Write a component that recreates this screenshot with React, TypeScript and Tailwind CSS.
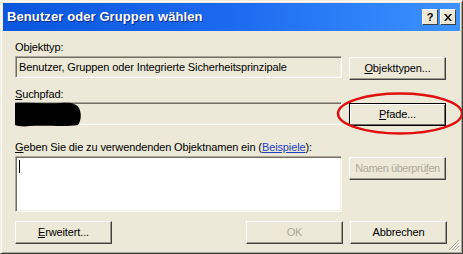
import React from 'react';

// XP-style "Benutzer oder Gruppen wählen" dialog

function Btn({
  children,
  disabled = false,
  isDefault = false,
  className = '',
}: {
  children: React.ReactNode;
  disabled?: boolean;
  isDefault?: boolean;
  className?: string;
}) {
  return (
    <div
      className={
        'h-[23px] w-[97px] flex items-center justify-center whitespace-nowrap bg-[#ECE9D8] text-[11px] leading-none ' +
        (isDefault
          ? 'border border-black shadow-[inset_1px_1px_0_#fff,inset_-1px_-1px_0_#716F64] '
          : 'border border-t-white border-l-white border-b-[#404040] border-r-[#404040] shadow-[inset_-1px_-1px_0_#9D9A8C] ') +
        (disabled ? 'text-[#ACA899] ' : 'text-black ') +
        className
      }
    >
      {children}
    </div>
  );
}

function Field({ children, className = '' }: { children?: React.ReactNode; className?: string }) {
  return (
    <div
      className={
        'w-[327px] border border-t-[#ACA899] border-l-[#ACA899] border-b-white border-r-white shadow-[inset_1px_1px_0_#716F64,inset_-1px_-1px_0_#F1EFE2] ' +
        className
      }
    >
      {children}
    </div>
  );
}

export default function App() {
  return (
    <div className="relative w-[463px] h-[254px] overflow-hidden bg-[#ECE9D8] font-['Liberation_Sans',Arial,sans-serif] text-[11px] tracking-[-0.12px] text-black border border-t-[#F1EFE2] border-l-[#F1EFE2] border-b-[#404040] border-r-[#404040] shadow-[inset_1px_1px_0_#fff,inset_-1px_-1px_0_#ACA899]">
      {/* Title bar */}
      <div className="mx-[2px] mt-[2px] h-[28px] flex items-center justify-between pl-[4px] pr-[4px] bg-gradient-to-r from-[#0A56DE] via-[#1C6AF0] to-[#3E92FD]">
        <span className="text-white font-bold text-[13px] tracking-[0.1px] [text-shadow:1px_1px_0_#0B2B8A]">
          Benutzer oder Gruppen wählen
        </span>
        <div className="flex gap-[2px]">
          <div className="w-[16px] h-[16px] flex items-center justify-center bg-[#ECE9D8] border border-t-white border-l-white border-b-[#404040] border-r-[#404040] text-[11px] font-bold leading-none">
            ?
          </div>
          <div className="w-[16px] h-[16px] flex items-center justify-center bg-[#ECE9D8] border border-t-white border-l-white border-b-[#404040] border-r-[#404040]">
            <svg width="8" height="7" viewBox="0 0 8 7">
              <path d="M0 0h2l2 2.5L6 0h2L5 3.5 8 7H6L4 4.5 2 7H0l3-3.5z" fill="#000" />
            </svg>
          </div>
        </div>
      </div>

      <div className="pl-[14px] pr-[15px]">
        {/* Objekttyp */}
        <div className="mt-[9px] h-[14px] leading-[14px]">Objekttyp:</div>
        <div className="mt-[2px] flex gap-[7px] items-start">
          <Field className="h-[22px] flex items-center pl-[3px]">
            Benutzer, Gruppen oder Integrierte Sicherheitsprinzipale
          </Field>
          <Btn className="mt-[1px]">
            <span>
              <span className="underline">O</span>bjekttypen...
            </span>
          </Btn>
        </div>

        {/* Suchpfad */}
        <div className="mt-[7px] h-[14px] leading-[14px]">
          <span className="underline">S</span>uchpfad:
        </div>
        <div className="mt-[1px] flex gap-[7px] items-start">
          <Field className="h-[23px] relative">
            <svg className="absolute -left-[1px] -top-[1px]" width="68" height="25" viewBox="0 0 68 25">
              <path
                d="M0 1 C10 0 30 2 46 1 C56 0 62 2 64 6 C67 12 66 19 63 23 C52 25 30 23 15 24 C8 25 2 24 0 23 Z"
                fill="#000"
              />
            </svg>
          </Field>
          <Btn isDefault className="mt-[1px]">
            <span>
              <span className="underline">P</span>fade...
            </span>
          </Btn>
        </div>

        {/* Objektnamen */}
        <div className="mt-[14px] h-[14px] leading-[14px]">
          <span className="underline">G</span>eben Sie die zu verwendenden Objektnamen ein (
          <span className="text-[#1C3FC4] underline">Beispiele</span>):
        </div>
        <div className="mt-[2px] flex gap-[7px] items-start">
          <div className="w-[327px] h-[56px] bg-white border border-t-[#ACA899] border-l-[#ACA899] border-b-white border-r-white shadow-[inset_1px_1px_0_#716F64,inset_-1px_-1px_0_#F1EFE2] pl-[3px] pt-[3px]">
            <div className="w-[1px] h-[13px] bg-black" />
          </div>
          <Btn disabled className="mt-[1px] tracking-[-0.45px]">
            <span>
              Namen überprü<span className="underline">f</span>en
            </span>
          </Btn>
        </div>

        {/* Bottom buttons */}
        <div className="mt-[9px] flex items-center">
          <Btn>
            <span>
              <span className="underline">E</span>rweitert...
            </span>
          </Btn>
          <div className="flex-1" />
          <Btn disabled>OK</Btn>
          <Btn className="ml-[7px]">Abbrechen</Btn>
        </div>
      </div>

      {/* resize grip */}
      <svg className="absolute right-[2px] bottom-[2px]" width="12" height="12" viewBox="0 0 12 12">
        <path d="M11 1L1 11M11 4L4 11M11 7L7 11M11 10L10 11" stroke="#ACA899" strokeWidth="1" />
        <path d="M12 2L2 12M12 5L5 12M12 8L8 12" stroke="#fff" strokeWidth="1" />
      </svg>

      {/* red annotation oval */}
      <svg className="absolute left-[333px] top-[90px]" width="131" height="46" viewBox="0 0 131 46">
        <ellipse cx="66" cy="22.5" rx="62" ry="20" fill="none" stroke="#E01010" strokeWidth="2.5" />
      </svg>
    </div>
  );
}
